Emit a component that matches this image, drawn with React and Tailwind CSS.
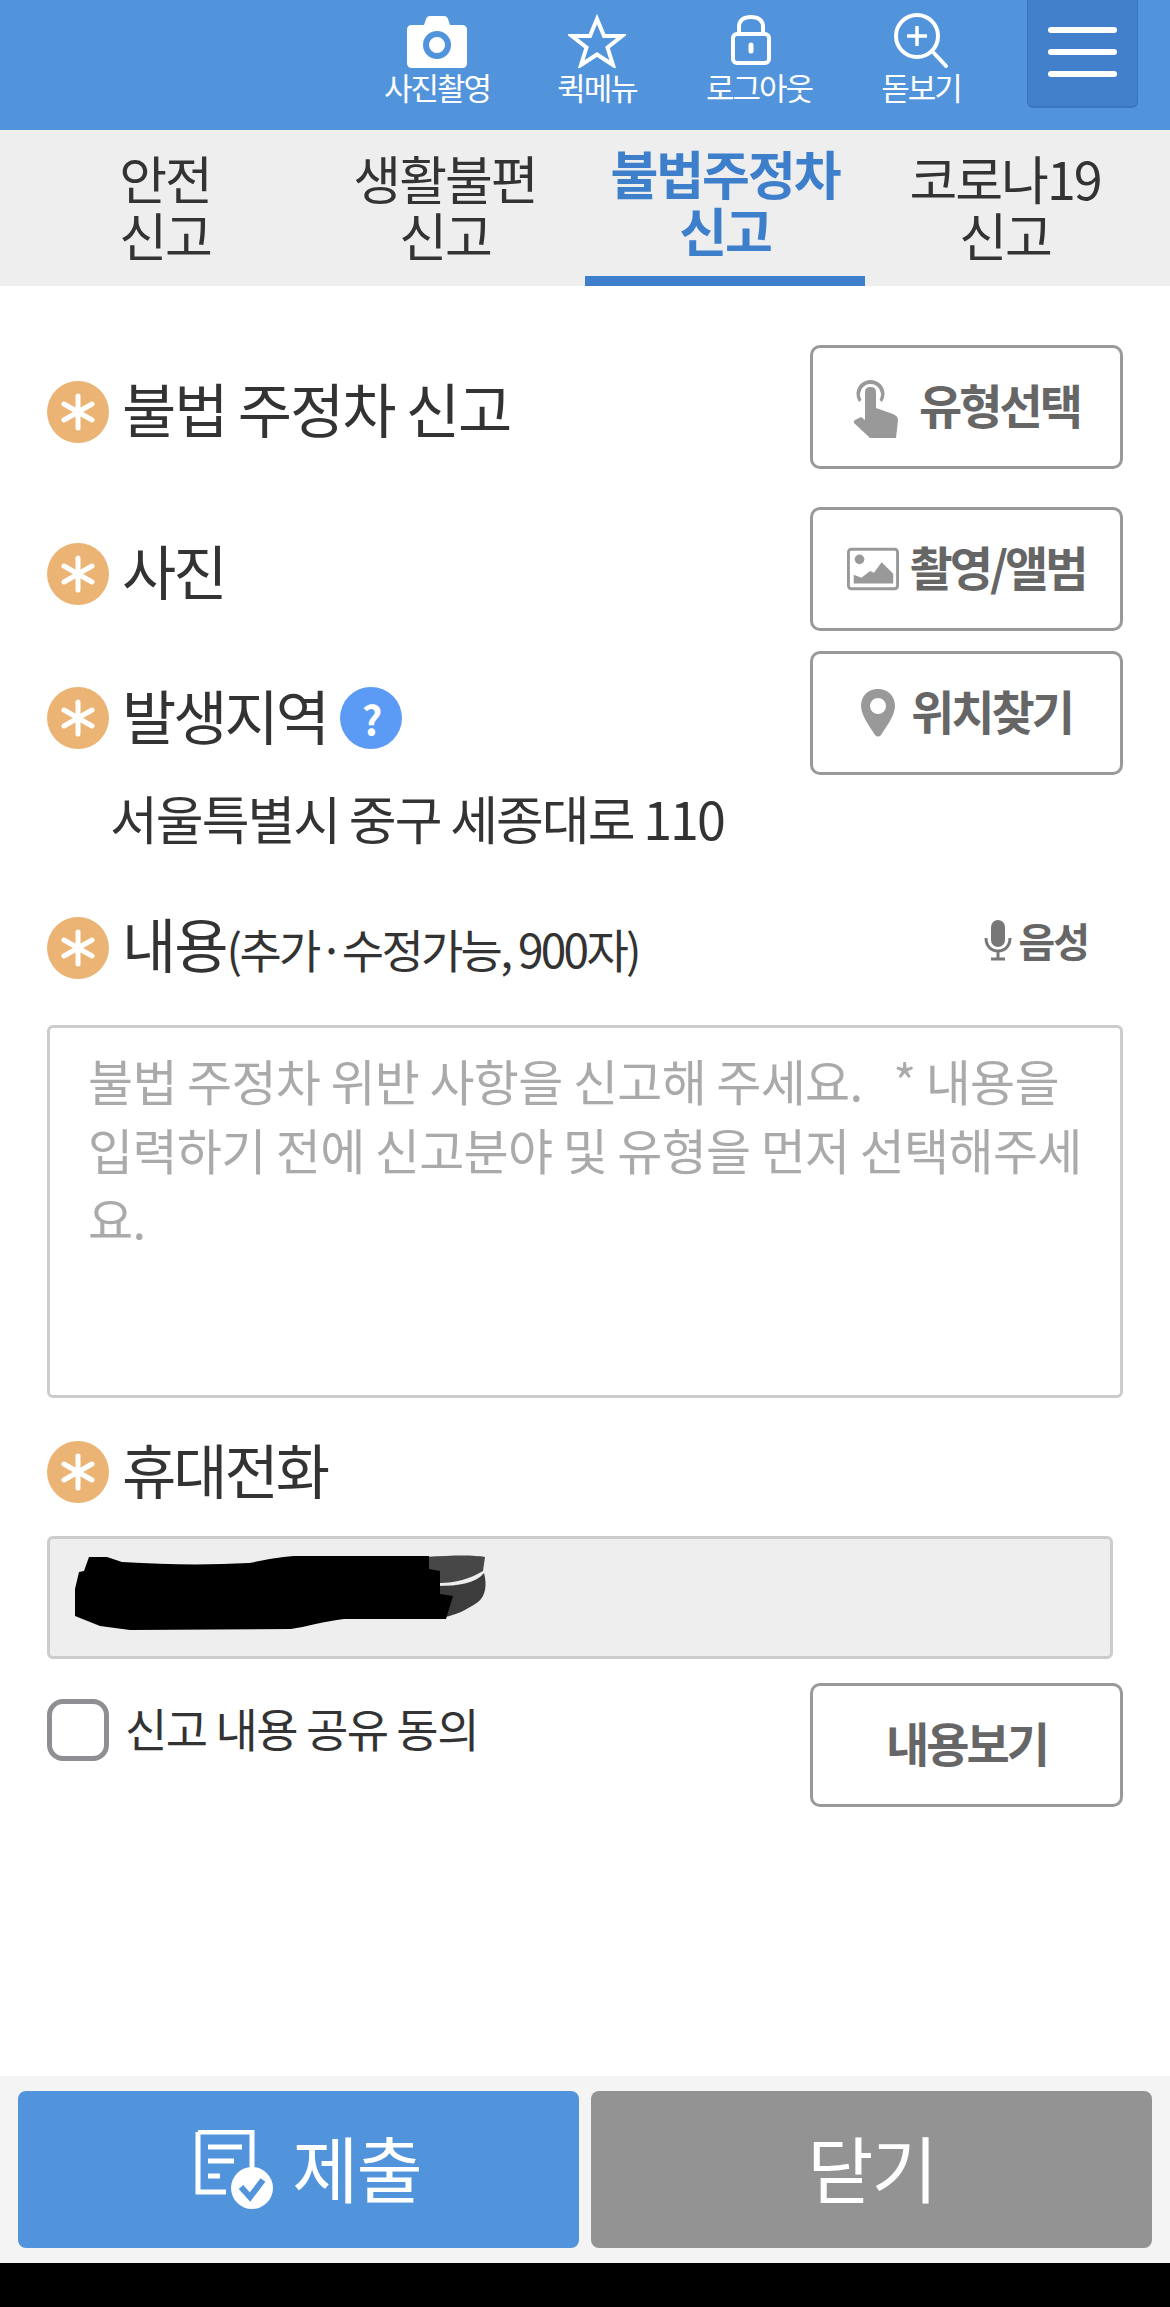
const FONT = { fontFamily: '"Noto Sans CJK KR", "Noto Sans", sans-serif' };

function Camera() {
  return (
    <svg width="60" height="52" viewBox="0 0 60 52">
      <path
        fillRule="evenodd"
        fill="#fff"
        d="M5 9h12l2-6q1-3 4-3h14q3 0 4 3l2 6h12q5 0 5 5v33q0 5-5 5H5q-5 0-5-5V14q0-5 5-5zM30 15a14 14 0 1 0 0 28a14 14 0 1 0 0-28zM30 21a8 8 0 1 1 0 16a8 8 0 1 1 0-16z"
      />
    </svg>
  );
}

function StarIcon() {
  return (
    <svg width="58" height="54" viewBox="0 0 58 54" fill="none" stroke="#fff" strokeWidth="4" strokeLinejoin="miter">
      <path d="M29 5l7 17h18l-14.500 11.500l5.500 17.500l-16-10.500l-16 10.500l5.500-17.500L4 22h18z" />
    </svg>
  );
}

function LockOpen() {
  return (
    <svg width="42" height="50" viewBox="0 0 42 50" fill="none" stroke="#fff" strokeWidth="4">
      <path d="M9 19V12C9 5 14 2 21 2s12 3 12 10v5" />
      <rect x="3" y="19" width="36" height="29" rx="4" />
      <path d="M21 30v6" strokeWidth="5" strokeLinecap="round" />
    </svg>
  );
}

function ZoomPlus() {
  return (
    <svg width="56" height="56" viewBox="0 0 56 56" fill="none" stroke="#fff" strokeWidth="4">
      <circle cx="24" cy="24" r="21" />
      <path d="M24 14v20M14 24h20" strokeWidth="3.500" />
      <path d="M39 39l14 15" strokeLinecap="round" />
    </svg>
  );
}

function Hand() {
  return (
    <svg width="46" height="62" viewBox="0 0 46 62" fill="#999">
      <path d="M6 26a14 14 0 1 1 23 0l-2.500-2a10.500 10.500 0 1 0-18 0z" />
      <path d="M12 16q0-5 5.500-5T23 16v16l17 6q5 2 5 6l-2 18H17L1 47q-1-2 1-3l6-3 4 3z" />
    </svg>
  );
}

function Picture() {
  return (
    <svg width="52" height="44" viewBox="0 0 54 44">
      <rect x="1.500" y="1.500" width="51" height="41" rx="3" fill="none" stroke="#999" strokeWidth="3" />
      <circle cx="13" cy="12" r="5" fill="#999" />
      <path d="M7 37V28l8 3 9-7 4 2 8-11 12 12v10z" fill="#999" />
    </svg>
  );
}

function Pin() {
  return (
    <svg width="34" height="48" viewBox="0 0 34 48">
      <path
        fill="#999"
        fillRule="evenodd"
        d="M17 0C7 0 0 7 0 17c0 10 10 22 14 29q3 3 6 0c4-7 14-19 14-29C34 7 27 0 17 0zM17 9a8 8 0 1 1 0 16a8 8 0 1 1 0-16z"
      />
    </svg>
  );
}

function MicFilled() {
  return (
    <svg width="28" height="42" viewBox="0 0 28 42" fill="none" stroke="#777" strokeWidth="3">
      <rect x="7" y="1" width="14" height="27" rx="7" fill="#777" stroke="none" />
      <path d="M2 19c0 8 5 13 12 13s12-5 12-13M14 32v7M7 40h14" />
    </svg>
  );
}

function DocCheck() {
  return (
    <svg width="80" height="80" viewBox="0 0 80 80">
      <path d="M4 2h54v40M32 62H4V2" fill="none" stroke="#fff" strokeWidth="5" />
      <path d="M14 17h34M14 31h26M14 46h12" stroke="#fff" strokeWidth="5" />
      <circle cx="58" cy="58" r="21" fill="#fff" />
      <path d="M47 57l9 10 13-17" fill="none" stroke="#5294db" strokeWidth="6" />
    </svg>
  );
}

function Required() {
  return (
    <svg width="62" height="62" viewBox="0 0 62 62" className="shrink-0">
      <circle cx="31" cy="31" r="31" fill="#ebb474" />
      <path d="M31 15v32M17 23l28 16M45 23L17 39" stroke="#fff" strokeWidth="5" strokeLinecap="round" />
    </svg>
  );
}

function Scribble() {
  return (
    <svg className="absolute left-[20px] top-[10px]" width="420" height="85" viewBox="70 1550 420 85">
      <path
        d="M425 1558C455 1556 475 1556 485 1558L483 1572C470 1580 455 1584 440 1584L425 1584Z"
        fill="#000"
        opacity="0.7"
      />
      <path
        d="M436 1587C460 1587 476 1584 484 1574C487 1585 486 1597 478 1603C465 1612 455 1616 445 1618L436 1618Z"
        fill="#000"
        opacity="0.75"
      />
      <path
        d="M89 1558L107 1558L122 1563C170 1566 210 1566 249 1564C270 1560 285 1557 298 1557L429 1557L429 1570L440 1572L440 1595L453 1597L446 1620L344 1620C325 1622 305 1628 291 1630L130 1631L100 1627L75 1617L75 1590L79 1573L84 1572Z"
        fill="#000"
      />
    </svg>
  );
}

function HeadItem({ icon, label, className, iconClass = "" }) {
  return (
    <div className={`flex flex-col items-center ${className}`}>
      <div className={`h-[68px] flex items-end ${iconClass}`}>{icon}</div>
      <div className="text-white text-[31px] leading-[38px] tracking-[-2px]">{label}</div>
    </div>
  );
}

function Tab({ top, active }) {
  return (
    <div
      className={`flex flex-col items-center justify-center text-[52px] leading-[57px] tracking-[-2px] ${
        active ? "font-bold text-[#3e7fcb] border-b-[10px] border-[#3e7fcb] pb-[4px]" : "text-[#333] pb-[5px]"
      }`}
    >
      <div>{top}</div>
      <div>신고</div>
    </div>
  );
}

function GhostButton({ icon, label, gap }) {
  return (
    <button
      className={`w-[313px] h-[124px] border-[3px] border-[#999] rounded-[10px] flex items-center justify-center ${gap} text-[#666] font-bold text-[47px] tracking-[-3px] bg-white shrink-0`}
    >
      {icon}
      <span className="pb-[6px]">{label}</span>
    </button>
  );
}

function Label({ children }) {
  return (
    <div className="h-[62px] flex items-center gap-[13px] text-[#333] text-[59px] leading-[62px] tracking-[-2px]">
      <Required />
      {children}
    </div>
  );
}

export default function App() {
  return (
    <div className="w-[1170px] h-[2307px] flex flex-col bg-white overflow-hidden" style={FONT}>
      <header className="h-[130px] shrink-0 bg-[#5294db] flex pr-[32px]">
        <HeadItem className="w-[160px] ml-[357px]" icon={<Camera />} label="사진촬영" />
        <HeadItem className="w-[160px]" icon={<StarIcon />} label="퀵메뉴" />
        <HeadItem className="w-[164px]" iconClass="mr-[16px] pb-[3px]" icon={<LockOpen />} label="로그아웃" />
        <HeadItem className="w-[160px]" icon={<ZoomPlus />} label="돋보기" />
        <div className="ml-auto w-[111px] h-[108px] bg-[#4280cc] border-b-[2px] border-x border-[#3b75bd] rounded-b-[6px] flex flex-col items-center gap-[16px] pt-[27px]">
          <div className="w-[69px] h-[6px] bg-white rounded-full" />
          <div className="w-[69px] h-[6px] bg-white rounded-full" />
          <div className="w-[69px] h-[6px] bg-white rounded-full" />
        </div>
      </header>

      <nav className="h-[156px] shrink-0 bg-[#eeeeee] grid grid-cols-4 px-[25px]">
        <Tab top="안전" />
        <Tab top="생활불편" />
        <Tab top="불법주정차" active />
        <Tab top="코로나19" />
      </nav>

      <main className="flex-1 px-[47px] pt-[59px]">
        <div className="flex justify-between items-center">
          <div className="pt-[10px]">
            <Label>
              <span className="pb-[8px]">불법 주정차 신고</span>
            </Label>
          </div>
          <GhostButton gap="gap-[20px]" icon={<Hand />} label="유형선택" />
        </div>

        <div className="flex justify-between items-center mt-[38px]">
          <div className="pt-[10px]">
            <Label>
              <span className="pb-[8px] tracking-[-3px]">사진</span>
            </Label>
          </div>
          <GhostButton gap="gap-[10px]" icon={<Picture />} label="촬영/앨범" />
        </div>

        <div className="flex justify-between items-center mt-[20px]">
          <div className="pt-[10px]">
            <Label>
              <span className="pb-[6px] tracking-[-3px]">발생지역</span>
              <div className="w-[62px] h-[62px] rounded-full bg-[#5b9bf5] text-white font-bold text-[40px] flex items-center justify-center">
                ?
              </div>
            </Label>
          </div>
          <GhostButton gap="gap-[16px]" icon={<Pin />} label="위치찾기" />
        </div>

        <div className="mt-[13px] pl-[63px] h-[60px] text-[#333] text-[52px] leading-[60px] tracking-[-2px]">
          서울특별시 중구 세종대로 110
        </div>

        <div className="flex justify-between items-center mt-[68px]">
          <Label>
            <span className="pb-[6px]">
              내용<span className="text-[46px] tracking-[-2.700px]">(추가·수정가능, 900자)</span>
            </span>
          </Label>
          <div className="flex items-center gap-[6px] text-[#666] font-bold text-[40px] leading-[48px] tracking-[-2px] pr-[35px] pb-[16px]">
            <MicFilled />
            음성
          </div>
        </div>

        <textarea
          readOnly
          className="block mt-[45px] w-full h-[373px] border-[3px] border-[#ccc] rounded-[6px] pl-[38px] pr-[14px] py-[17px] text-[49px] leading-[69px] tracking-[-0.7px] resize-none outline-none placeholder:text-[#aaa]"
          placeholder={"불법 주정차 위반 사항을 신고해 주세요.   * 내용을 입력하기 전에 신고분야 및 유형을 먼저 선택해주세요."}
        />

        <div className="mt-[43px]">
          <Label>
            <span className="pb-[6px] tracking-[-3px]">휴대전화</span>
          </Label>
        </div>

        <div className="relative mt-[33px] w-[1066px] h-[123px] bg-[#eeeeee] border-[3px] border-[#ccc] rounded-[6px]">
          <Scribble />
        </div>

        <div className="flex justify-between items-start mt-[24px]">
          <label className="flex items-center gap-[16px] mt-[13px] text-[#333] text-[46px] leading-[62px] tracking-[-1.500px]">
            <span className="w-[62px] h-[62px] border-[5px] border-[#8e8e93] rounded-[16px] bg-white" />
            <span className="pb-[6px]">신고 내용 공유 동의</span>
          </label>
          <GhostButton gap="gap-0" label="내용보기" />
        </div>
      </main>

      <footer className="h-[187px] shrink-0 bg-[#f4f4f4] grid grid-cols-2 gap-[12px] px-[18px] py-[15px]">
        <button className="bg-[#5294db] rounded-[8px] flex items-center justify-center gap-[18px] pl-[18px] text-white text-[72px] tracking-[-2px]">
          <DocCheck />
          <span className="pb-[8px]">제출</span>
        </button>
        <button className="bg-[#939393] rounded-[8px] flex items-center justify-center text-white text-[72px] tracking-[-2px]">
          <span className="pb-[8px]">닫기</span>
        </button>
      </footer>
      <div className="h-[44px] shrink-0 bg-black" />
    </div>
  );
}
